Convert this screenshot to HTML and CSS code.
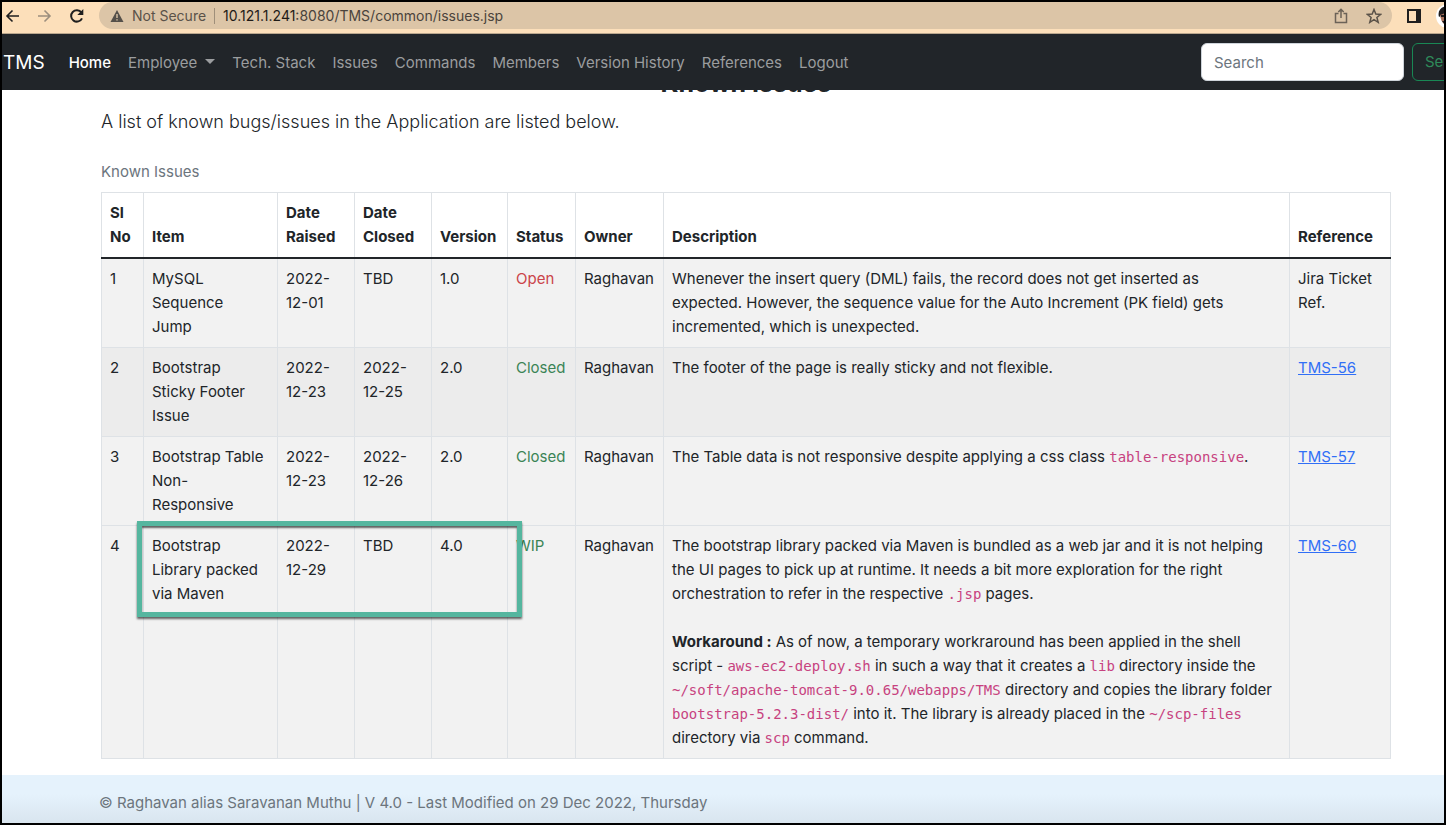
FILE: index.html
```
<!DOCTYPE html>
<html lang="en">
<head>
<meta charset="utf-8">
<title>TMS - Known Issues</title>
<link rel="stylesheet" href="styles.css">
</head>
<body>
<div class="window">
  <div class="toolbar">
    <button class="tool back" aria-label="Back"><svg width="16" height="16" viewBox="0 0 16 16"><path d="M14 8H2M7.500 2.500 2 8l5.500 5.500"/></svg></button>
    <button class="tool forward" aria-label="Forward"><svg width="16" height="16" viewBox="0 0 16 16"><path d="M1 8h12M7.500 2.500 13 8l-5.500 5.500"/></svg></button>
    <button class="tool" aria-label="Reload"><svg width="16" height="16" viewBox="0 0 16 16"><path d="M13 10.300a5.700 5.700 0 1 1-.6-5.800"/><path class="solid" d="M14.300 1v6h-6z"/></svg></button>
    <div class="address">
      <svg class="warn" width="14" height="14" viewBox="0 0 14 14"><path fill="#55504a" d="M7 1 13.500 13H.5z"/><path stroke="#dcc5a7" stroke-width="1.400" d="M7 5v4M7 10.200v1.400"/></svg>
      <span class="secure">Not Secure</span>
      <span class="url"><span class="host">10.121.1.241</span>:8080/TMS/common/issues.jsp</span>
      <button class="tool share" aria-label="Share"><svg width="14" height="16" viewBox="0 0 14 16"><path d="M4.500 5.500H1.500v9h11v-9h-3M7 10V1.500M4.300 4 7 1.300 9.700 4"/></svg></button>
      <button class="tool star" aria-label="Bookmark"><svg width="16" height="16" viewBox="0 0 16 16"><path d="m8 1.500 1.800 4.600 4.900.3-3.800 3.100 1.300 4.800L8 11.600l-4.200 2.700 1.300-4.800L1.300 6.400l4.900-.3z"/></svg></button>
    </div>
    <button class="tool" aria-label="Side panel"><svg width="16" height="16" viewBox="0 0 16 16"><path d="M2 2h12v12H2z"/><path class="solid" d="M10 2h4v12h-4z"/></svg></button>
    <button class="tool avatar" aria-label="Profile"><svg width="24" height="24" viewBox="0 0 24 24"><circle cx="12" cy="12" r="12" fill="#fff"/><path class="hair" d="M3 13C1 6 6 2 12 2v9H6z"/><path class="skin" d="M4 11l8-3v13c-5 0-7-4-8-10z"/><path class="hair" d="M5 11h4v2H5zM6 17h6v4H9z"/></svg></button>
  </div>

  <nav class="navbar">
    <a class="brand" href="#">TMS</a>
    <div class="links">
      <a class="active" href="#">Home</a>
      <a class="dropdown" href="#">Employee</a>
      <a href="#">Tech. Stack</a>
      <a href="#">Issues</a>
      <a href="#">Commands</a>
      <a href="#">Members</a>
      <a href="#">Version History</a>
      <a href="#">References</a>
      <a href="#">Logout</a>
    </div>
    <form class="search">
      <input type="search" placeholder="Search" aria-label="Search">
      <button type="button">Search</button>
    </form>
  </nav>

  <main class="content">
    <h1>Known Issues</h1>
    <p class="lead">A list of known bugs/issues in the Application are listed below.</p>
    <table class="issues">
      <caption>Known Issues</caption>
      <colgroup>
        <col class="c-no"><col class="c-item"><col class="c-date"><col class="c-date"><col class="c-version"><col class="c-status"><col class="c-owner"><col><col class="c-ref">
      </colgroup>
      <thead>
        <tr><th>Sl No</th><th>Item</th><th>Date Raised</th><th>Date Closed</th><th>Version</th><th>Status</th><th>Owner</th><th>Description</th><th>Reference</th></tr>
      </thead>
      <tbody>
        <tr>
          <td>1</td><td>MySQL<br>Sequence<br>Jump</td><td>2022-<wbr>12-01</td><td>TBD</td><td>1.0</td><td class="danger">Open</td><td>Raghavan</td>
          <td>Whenever the insert query (DML) fails, the record does not get inserted as<br>expected. However, the sequence value for the Auto Increment (PK field) gets<br>incremented, which is unexpected.</td>
          <td>Jira Ticket Ref.</td>
        </tr>
        <tr>
          <td>2</td><td>Bootstrap<br>Sticky Footer<br>Issue</td><td>2022-<wbr>12-23</td><td>2022-<wbr>12-25</td><td>2.0</td><td class="success">Closed</td><td>Raghavan</td>
          <td>The footer of the page is really sticky and not flexible.</td>
          <td><a href="#">TMS-56</a></td>
        </tr>
        <tr>
          <td>3</td><td>Bootstrap Table Non-<br>Responsive</td><td>2022-<wbr>12-23</td><td>2022-<wbr>12-26</td><td>2.0</td><td class="success">Closed</td><td>Raghavan</td>
          <td>The Table data is not responsive despite applying a css class <code>table-responsive</code>.</td>
          <td><a href="#">TMS-57</a></td>
        </tr>
        <tr>
          <td>4</td><td class="marked">Bootstrap Library packed via Maven<span class="highlight"></span></td><td>2022-<wbr>12-29</td><td>TBD</td><td>4.0</td><td class="success">WIP</td><td>Raghavan</td>
          <td>The bootstrap library packed via Maven is bundled as a web jar and it is not helping<br>the UI pages to pick up at runtime. It needs a bit more exploration for the right<br>orchestration to refer in the respective <code>.jsp</code> pages.<br><br><b>Workaround :</b> As of now, a temporary workraround has been applied in the shell<br>script - <code>aws-ec2-deploy.sh</code> in such a way that it creates a <code>lib</code> directory inside the<br><code>~/soft/apache-tomcat-9.0.65/webapps/TMS</code> directory and copies the library folder<br><code>bootstrap-5.2.3-dist/</code> into it. The library is already placed in the <code>~/scp-files</code><br>directory via <code>scp</code> command.</td>
          <td><a href="#">TMS-60</a></td>
        </tr>
      </tbody>
    </table>
  </main>

  <footer class="footer">© Raghavan alias Saravanan Muthu | V 4.0 - Last Modified on 29 Dec 2022, Thursday</footer>
</div>
</body>
</html>
```
FILE: styles.css
```
* { box-sizing: border-box; }

body {
  margin: 0;
  font: 400 15px/24px Inter, "Liberation Sans", sans-serif;
  color: #212529;
  background: #fff;
}

.window {
  display: flex;
  flex-direction: column;
  min-height: 100vh;
  border: 2px solid #000;
  overflow: hidden;
}

/* Browser toolbar */
.toolbar {
  display: flex;
  align-items: center;
  gap: 16px;
  height: 32px;
  padding: 0 0 4px 3px;
  background: #fcdfba;
  border-bottom: 1px solid #b9a68d;
  position: relative;
  z-index: 2;
}
.tool {
  display: flex;
  flex: none;
  padding: 0;
  border: 0;
  background: none;
  color: #1f1f1f;
}
.tool path { fill: none; stroke: currentColor; stroke-width: 2; }
.tool .solid { fill: currentColor; stroke: none; }
.back path, .forward path { stroke-width: 1.6; }
.forward { color: #9c8f7e; }
.address {
  display: flex;
  flex: 1;
  align-items: center;
  height: 27px;
  padding: 0 10px 0 11px;
  margin-left: -2px;
  margin-right: -2px;
  border-radius: 14px;
  background: #dcc5a7;
  font-size: 14px;
  color: #5a5249;
}
.secure {
  padding: 0 8px;
  line-height: 16px;
  border-right: 1px solid #9f8f7a;
}
.url { padding-left: 8px; color: #4a433c; }
.host { color: #1f1b17; }
.share { margin-left: auto; margin-right: 18px; color: #6b6257; }
.star { color: #5a5249; }
.share path, .star path { stroke-width: 1.5; }
.avatar { margin-right: -16px; margin-left: -2px; }
.avatar path { stroke: none; }
.avatar .hair { fill: #1d1b1c; }
.avatar .skin { fill: #a8705a; }

/* Navigation bar */
.navbar {
  display: flex;
  align-items: center;
  height: 56px;
  padding-left: 1px;
  background: #212529;
  position: relative;
  z-index: 1;
}
.navbar a { color: #9b9d9f; text-decoration: none; white-space: nowrap; }
.navbar .brand { margin-right: 24px; font-size: 19px; color: #fff; }
.links { display: flex; gap: 17px; }
.navbar .brand, .links { padding-top: 2px; }
.navbar .active { color: #fff; font-weight: 500; }
.dropdown::after {
  content: "";
  display: inline-block;
  margin-left: 8px;
  vertical-align: 4px;
  border: 5px solid transparent;
  border-top-color: currentColor;
  border-bottom: 0;
}
.search { display: flex; gap: 8px; margin-left: auto; margin-right: -48px; }
.search input, .search button {
  height: 38px;
  padding: 0 12px;
  border-radius: 6px;
  font: inherit;
}
.search input { width: 203px; border: 1px solid #ced4da; background: #fff; }
.search input::placeholder { color: #6c757d; opacity: 1; }
.search button { width: 80px; border: 1px solid #198754; background: none; color: #2f8a5a; text-align: left; }

/* Page content */
.content {
  flex: 1;
  margin-top: -24px;
  padding: 0 53px 16px 99px;
}
h1 {
  margin: 0 0 7px;
  font-size: 25px;
  line-height: 34px;
  font-weight: 700;
  text-align: center;
}
.lead { margin: 0 0 15px; font-size: 18px; line-height: 30px; font-weight: 300; }

.issues {
  width: 100%;
  table-layout: fixed;
  border-collapse: collapse;
}
.issues caption { padding: 8px 0; text-align: left; color: #6c757d; }
.issues th, .issues td {
  padding: 8px;
  border: 1px solid #dee2e6;
  text-align: left;
  vertical-align: top;
}
.issues th { vertical-align: bottom; font-weight: 700; border-bottom: 2px solid #212529; }
.issues tbody tr { background: #f2f2f2; }
.issues tbody tr:nth-child(2) { background: #ececec; }
.c-no { width: 42px; }
.c-item { width: 134px; }
.c-date { width: 77px; }
.c-version { width: 76px; }
.c-status { width: 68px; }
.c-owner { width: 88px; }
.c-ref { width: 101px; }
.issues .danger { color: #cb444a; }
.issues .success { color: #3b8456; }
.issues a { color: #316ff6; }
code { font: 14px/20px "DejaVu Sans Mono", monospace; color: #c7427f; }

.marked { position: relative; }
.highlight {
  position: absolute;
  top: -5px;
  left: -7px;
  width: 385px;
  height: 96px;
  border: 5px solid #55b69f;
  box-shadow: 0 2px 2px rgba(0, 0, 0, .6), inset 0 2px 2px rgba(0, 0, 0, .6);
  z-index: 1;
}

.footer {
  padding: 16px 97px 8px;
  color: #6c757d;
  background: linear-gradient(#e5f2fc 40%, #d9e5ef);
}
```
